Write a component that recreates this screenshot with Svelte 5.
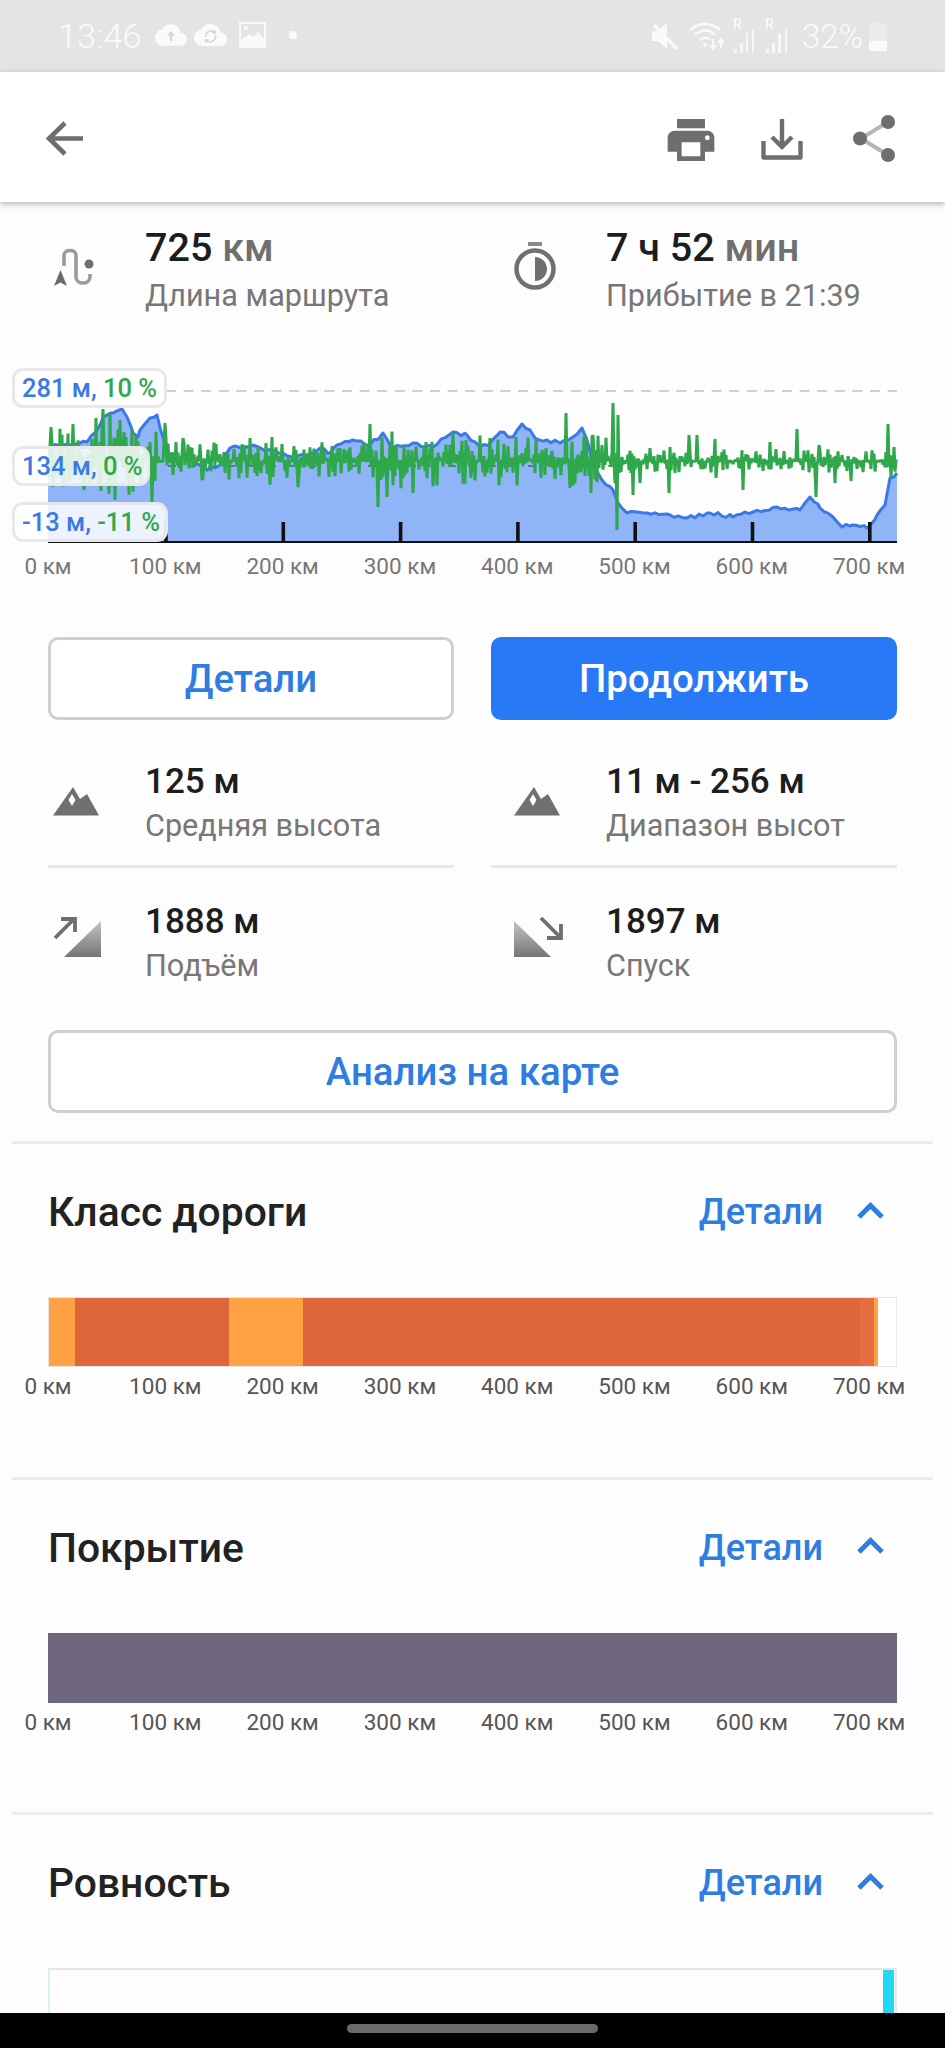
<script>
  const ticks = [0, 100, 200, 300, 400, 500, 600, 700];

  // blue elevation line, page coordinates read off the chart
  const elevation = [
    [48, 448], [63, 445], [87, 442], [97, 430], [103, 417], [113, 413], [122, 409], [127, 417],
    [133, 433], [138, 437], [140, 430], [150, 418], [157, 415], [163, 437], [170, 457], [187, 458],
    [200, 465], [207, 470], [220, 465], [230, 448], [253, 445], [267, 450], [293, 457], [307, 455],
    [320, 448], [330, 453], [337, 445], [353, 440], [370, 445], [383, 433], [393, 448], [413, 443],
    [433, 447], [453, 432], [467, 435], [480, 447], [490, 443], [500, 432], [513, 437], [522, 424],
    [530, 430], [535, 438], [547, 440], [560, 443], [573, 437], [582, 428], [587, 440], [593, 463],
    [602, 480], [613, 490], [618, 503], [627, 513], [643, 513], [670, 515], [687, 518], [710, 513],
    [733, 517], [753, 512], [777, 507], [800, 510], [810, 497], [820, 508], [833, 517], [842, 527],
    [852, 525], [867, 528], [877, 515], [885, 505], [890, 478], [897, 473]
  ];

  // tall green spikes that stand out of the noise
  const spikes = [
    [51, 427], [73, 424], [84, 490], [96, 418], [103, 409], [110, 413], [115, 500], [120, 420],
    [152, 503], [165, 423], [183, 438], [202, 480], [250, 438], [272, 437], [270, 485], [298, 438],
    [298, 487], [370, 424], [378, 507], [387, 497], [413, 430], [413, 493], [453, 433], [516, 437],
    [566, 413], [570, 488], [593, 435], [591, 493], [613, 403], [618, 415], [617, 530], [633, 443],
    [633, 495], [640, 483], [650, 448], [670, 447], [669, 493], [689, 435], [697, 435], [715, 439],
    [716, 478], [743, 490], [770, 442], [797, 429], [816, 497], [819, 445], [835, 483], [851, 481],
    [888, 424], [891, 477], [894, 447]
  ];

  function random(seed) {
    let s = seed;
    return () => {
      s = (s * 16807) % 2147483647;
      return s / 2147483647;
    };
  }

  function noiseAmp(x) {
    if (x < 170) return 34;
    if (x > 375 && x < 405) return 30;
    if (x > 430 && x < 620) return 26;
    if (x < 620) return 19;
    return 12;
  }

  function greenPath() {
    const rnd = random(4711);
    const byX = new Map(spikes.map(([x, y]) => [x, y]));
    let d = '';
    for (let x = 48; x <= 897; x += 1) {
      const side = x % 2 ? 1 : -1;
      const y = byX.get(x) ?? 461 + side * noiseAmp(x) * Math.pow(rnd(), 1.9);
      d += `${d ? 'L' : 'M'}${x} ${y.toFixed(1)}`;
    }
    return d;
  }

  function bluePath() {
    const rnd = random(99);
    let d = '';
    elevation.forEach(([x, y], i) => {
      const next = elevation[i + 1];
      d += `${d ? 'L' : 'M'}${x} ${y}`;
      if (!next) return;
      for (let px = x + 4; px < next[0] - 1; px += 4) {
        const k = (px - x) / (next[0] - x);
        d += `L${px} ${(y + (next[1] - y) * k + (rnd() - 0.5) * 4).toFixed(1)}`;
      }
    });
    return d;
  }

  const line = bluePath();
  const area = `${line}L897 542L48 542Z`;
  const green = greenPath();

  const roadClass = [
    ['#ffa244', 27],
    ['#df663b', 154],
    ['#ffa244', 74],
    ['#df663b', 557],
    ['#e56e40', 14],
    ['#ffa244', 4],
    ['#ffffff', 19]
  ];
</script>

{#snippet axis()}
  <div class="axis">
    {#each ticks as t}
      <span>{t} км</span>
    {/each}
  </div>
{/snippet}

{#snippet head(title)}
  <div class="sec-head">
    <h2>{title}</h2>
    <span class="sec-link">Детали</span>
    <svg class="chev" width="29" height="17" viewBox="0 0 29 17"><path d="M3 15L14.500 3.500L26 15" fill="none" stroke="#2f7de1" stroke-width="5" /></svg>
  </div>
{/snippet}

{#snippet mountain()}
  <svg class="peak" width="46" height="29" viewBox="0 0 46 29">
    <path d="M0 28.500L20 0L27 12L34 7L46 28.500Z" fill="#707070" />
    <path d="M19 7L22.500 13L19 19L15.500 13Z" fill="#fff" />
  </svg>
{/snippet}

<div class="screen">
  <div class="status">
    <span class="clock">13:46</span>
    <svg class="cloud" width="32" height="24" viewBox="0 0 24 18"><path d="M19.350 7.040C18.670 3.590 15.640 1 12 1 9.110 1 6.600 2.640 5.350 5.040 2.340 5.360 0 7.910 0 11c0 3.310 2.690 6 6 6h13c2.760 0 5-2.240 5-5 0-2.640-2.050-4.780-4.650-4.960z" fill="#fafafa" /><path d="M12 6L8.800 9.500h2.400v4h1.600v-4h2.400z" fill="#d6d6d6" /></svg>
    <svg class="cloud2" width="33" height="26" viewBox="0 0 24 18"><path d="M19.350 7.040C18.670 3.590 15.640 1 12 1 9.110 1 6.600 2.640 5.350 5.040 2.340 5.360 0 7.910 0 11c0 3.310 2.690 6 6 6h13c2.760 0 5-2.240 5-5 0-2.640-2.050-4.780-4.650-4.960z" fill="#fafafa" /><path d="M8.500 10.500A4 4 0 0 1 15 7M15.500 9A4 4 0 0 1 9 13M15.500 5.500V7.500H13.500M8.500 14.500V12.500H10.500" fill="none" stroke="#d6d6d6" stroke-width="1.200" /></svg>
    <svg class="pic" width="27" height="26" viewBox="0 0 27 26"><path d="M0 0H27V26H0Z" fill="#fafafa" /><path d="M2 2H25V17L19 10L14 15L10 12L2 18Z" fill="#e4e4e4" /><circle cx="7" cy="6" r="2" fill="#fafafa" /></svg>
    <span class="dot"></span>
    <span class="grow"></span>
    <svg class="mute" width="26" height="28" viewBox="0 0 26 28"><path d="M0 9H6L15 1V27L6 19H0Z" fill="#fafafa" /><path d="M2 3L25 27" stroke="#fafafa" stroke-width="3.500" /></svg>
    <svg class="wifi" width="36" height="28" viewBox="0 0 36 28"><g fill="none" stroke="#fafafa" stroke-width="2.500"><path d="M1 8C10 0 22 0 31 8" /><path d="M6 13C12 7 20 7 26 13" /><path d="M11 18C14 15 18 15 21 18" /></g><circle cx="16" cy="23" r="2" fill="#fafafa" /><path d="M24 17V26M32 26V18M21 23L24 27L27 23M29 21L32 17L35 21" fill="none" stroke="#fafafa" stroke-width="1.800" /></svg>
    <div class="signal">
      <b>R</b>
      <svg width="25" height="28" viewBox="0 0 25 28"><path d="M2 24H5V28H2ZM8 18H11V28H8ZM14 8H16V28H14ZM20 4H22V28H20Z" fill="#fafafa" fill-opacity=".8" /></svg>
    </div>
    <div class="signal second">
      <b>R</b>
      <svg width="25" height="28" viewBox="0 0 25 28"><path d="M2 24H5V28H2ZM8 18H11V28H8ZM14 8H17V28H14ZM21 4H23V28H21Z" fill="#fafafa" fill-opacity=".85" /></svg>
    </div>
    <span class="pct">32%</span>
    <svg class="batt" width="20" height="29" viewBox="0 0 20 29"><path d="M6 0H14V3H19V29H1V3H6Z" fill="#fafafa" fill-opacity=".35" /><path d="M1 19H19V29H1Z" fill="#fafafa" /></svg>
  </div>

  <header class="bar">
    <svg class="back" width="39" height="35" viewBox="0 0 39 35"><path d="M38 17.500H4M20 2L4 17.500L20 33" fill="none" stroke="#6e6e6e" stroke-width="4.600" /></svg>
    <span class="grow"></span>
    <svg class="print" width="48" height="42" viewBox="2 3 20 18"><path d="M19 8H5c-1.660 0-3 1.340-3 3v6h4v4h12v-4h4v-6c0-1.660-1.340-3-3-3zm-3 11H8v-6h8v6zm3-7c-.550 0-1-.450-1-1s.450-1 1-1 1 .450 1 1-.450 1-1 1zm-1-9H6v4h12V3z" fill="#6e6e6e" /></svg>
    <svg class="save" width="42" height="41" viewBox="0 0 42 41"><path d="M21 0V27M11 18L21 28L31 18" fill="none" stroke="#6e6e6e" stroke-width="4.400" /><path d="M2.500 22V38.500H39.500V22" fill="none" stroke="#6e6e6e" stroke-width="4.400" stroke-linejoin="round" /></svg>
    <svg class="share" width="43" height="47" viewBox="0 0 43 47"><path d="M8 23.500L35 7M8 23.500L35 40" stroke="#b5b5b5" stroke-width="4" /><circle cx="7" cy="23.500" r="7" fill="#6e6e6e" /><circle cx="35" cy="7" r="7" fill="#6e6e6e" /><circle cx="35" cy="40" r="7" fill="#6e6e6e" /></svg>
  </header>

  <main>
    <div class="stats first">
      <div class="stat">
        <span class="ic">
          <svg width="42" height="42" viewBox="0 0 42 42">
            <path d="M11 21V10C11 4 23 4 23 10V32C23 40 37 40 37 32V29" fill="none" stroke="#9a9a9a" stroke-width="3.600" />
            <path d="M7.500 25L1 41L7.500 37.500L14 41Z" fill="#6a6a6a" />
            <circle cx="36" cy="19" r="4.500" fill="#6e6e6e" />
          </svg>
        </span>
        <div><p class="val">725 <em>км</em></p><p class="lab">Длина маршрута</p></div>
      </div>
      <div class="stat">
        <span class="ic">
          <svg width="42" height="48" viewBox="0 0 42 48">
            <path d="M14 0H28V4H14Z" fill="#8a8a8a" />
            <circle cx="21" cy="27" r="18.500" fill="none" stroke="#707070" stroke-width="4.500" />
            <path d="M21 15A12 12 0 0 1 21 39Z" fill="#707070" />
          </svg>
        </span>
        <div><p class="val">7 ч 52 <em>мин</em></p><p class="lab">Прибытие в 21:39</p></div>
      </div>
    </div>

    <div class="chart">
      <svg width="945" height="190" viewBox="0 360 945 190">
        <path d={area} fill="#8fb4f8" />
        <path d="M166 391H897" stroke="#cfcfcf" stroke-width="2" stroke-dasharray="10 7.600" />
        <path d="M48 466H620" stroke="#3a5a40" stroke-width="2" stroke-dasharray="8 12" opacity=".6" />
        <path d={line} fill="none" stroke="#3b78e8" stroke-width="3" stroke-linejoin="round" />
        <path d={green} fill="none" stroke="#2ea84a" stroke-width="3" stroke-linejoin="bevel" />
        <path d="M48 542H897" stroke="#111" stroke-width="2" />
        {#each ticks.slice(1) as t, i}
          <path d="M{166 + i * 117.300} 522V542" stroke="#111" stroke-width="3.600" />
        {/each}
      </svg>
      <div class="tag t1"><span class="b">281 м,</span> <span class="g">10 %</span></div>
      <div class="tag t2"><span class="b">134 м,</span> <span class="g">0 %</span></div>
      <div class="tag t3"><span class="b">-13 м,</span> <span class="g">-11 %</span></div>
    </div>
    {@render axis()}

    <div class="btns">
      <button class="ghost">Детали</button>
      <button class="solid">Продолжить</button>
    </div>

    <div class="stats second">
      <div class="stat line">
        <span class="ic">{@render mountain()}</span>
        <div><p class="val">125 м</p><p class="lab">Средняя высота</p></div>
      </div>
      <div class="stat line">
        <span class="ic">{@render mountain()}</span>
        <div><p class="val">11 м - 256 м</p><p class="lab">Диапазон высот</p></div>
      </div>
      <div class="stat">
        <span class="ic up">
          <svg width="48" height="42" viewBox="0 0 48 42">
            <defs><linearGradient id="slope" x1="0" y1="0" x2="0" y2="1"><stop offset="0" stop-color="#c4c4c4" /><stop offset="1" stop-color="#757575" /></linearGradient></defs>
            <path d="M48 5V41H11Z" fill="url(#slope)" />
            <path d="M2 22L21 3M8 3H22V16" fill="none" stroke="#6e6e6e" stroke-width="3.800" />
          </svg>
        </span>
        <div><p class="val">1888 м</p><p class="lab">Подъём</p></div>
      </div>
      <div class="stat">
        <span class="ic up">
          <svg width="50" height="42" viewBox="0 0 50 42">
            <defs><linearGradient id="slope2" x1="0" y1="0" x2="0" y2="1"><stop offset="0" stop-color="#c4c4c4" /><stop offset="1" stop-color="#757575" /></linearGradient></defs>
            <path d="M0 5V41H37Z" fill="url(#slope2)" />
            <path d="M27 2L47 22M47 8V22H33" fill="none" stroke="#6e6e6e" stroke-width="3.800" />
          </svg>
        </span>
        <div><p class="val">1897 м</p><p class="lab">Спуск</p></div>
      </div>
    </div>

    <button class="ghost wide">Анализ на карте</button>

    <section>
      {@render head('Класс дороги')}
      <div class="strip road">
        {#each roadClass as [color, w]}
          <i style="background:{color};width:{w}px"></i>
        {/each}
      </div>
      {@render axis()}
    </section>

    <section>
      {@render head('Покрытие')}
      <div class="strip plain"></div>
      {@render axis()}
    </section>

    <section>
      {@render head('Ровность')}
      <div class="strip smooth"><i></i></div>
    </section>
  </main>

  <div class="nav"><span></span></div>
</div>

<style>
  :global(body) {
    background: #fdfdfd;
    overflow: hidden;
  }

  .screen {
    position: relative;
    height: 2048px;
    overflow: hidden;
    font-family: Roboto, "Liberation Sans", sans-serif;
    background: #fdfdfd;
  }

  p, h2 { margin: 0; }

  .grow { flex: 1; }

  .status {
    height: 72px;
    box-sizing: border-box;
    background: #e4e4e4;
    display: flex;
    align-items: center;
    padding: 0 57px 0 58px;
    color: #fafafa;
  }

  .clock { font-size: 34px; font-weight: 300; letter-spacing: .2px; width: 97px; }
  .cloud { margin-top: -2px; }
  .cloud2 { margin-left: 7px; margin-top: -2px; }
  .pic { margin-left: 12px; margin-top: -3px; }
  .dot { width: 8px; height: 8px; border-radius: 50%; background: #fafafa; margin-left: 23px; margin-top: -2px; }
  .mute { margin-right: 11px; }
  .wifi { margin-right: 7px; }

  .signal { position: relative; width: 25px; margin-right: 7px; height: 34px; display: flex; align-items: flex-end; }
  .signal b { position: absolute; left: 1px; top: -3px; font-size: 14px; font-weight: 500; }
  .signal.second { margin-right: 13px; }

  .pct { font-size: 33px; font-weight: 300; width: 66px; }

  .bar {
    height: 130px;
    box-sizing: border-box;
    background: #fff;
    display: flex;
    align-items: center;
    padding: 2px 49px 0 45px;
    box-shadow: 0 2px 6px rgba(0, 0, 0, .3);
    position: relative;
  }

  .print { margin-top: 3px; }
  .save { margin-left: 46px; margin-top: 3px; }
  .share { margin-left: 50px; }

  .stats {
    display: grid;
    grid-template-columns: 406px 406px;
    column-gap: 37px;
    margin: 0 48px;
  }

  .stats.first { padding-top: 20px; }
  .stats.second { margin-top: 21px; }

  .stat {
    display: flex;
    align-items: center;
    height: 150px;
    box-sizing: border-box;
  }

  .stat:nth-child(even) { padding-left: 18px; }

  .stats.first .stat { height: 98px; }

  .stat.line { border-bottom: 3px solid #e8e8e8; height: 127px; }

  .ic {
    width: 97px;
    flex: none;
    display: flex;
    padding-left: 5px;
    box-sizing: border-box;
  }

  .stats.first .ic { margin-top: -10px; }
  .ic.up { margin-top: -12px; }
  .peak { margin-top: -4px; }

  .val {
    font-size: 35px;
    line-height: 46px;
    font-weight: 500;
    color: #1d1d1d;
  }

  .stats.first .val { font-size: 39.500px; margin-bottom: 4px; }

  .val em { font-style: normal; color: #6f6f6f; }

  .lab {
    font-size: 30.600px;
    line-height: 42px;
    color: #777;
  }

  .chart {
    position: relative;
    height: 190px;
    margin-top: 40px;
  }

  .chart svg { display: block; }

  .tag {
    position: absolute;
    left: 12px;
    box-sizing: border-box;
    height: 40px;
    padding: 0 7px;
    border: 3px solid #e8e8e8;
    border-radius: 11px;
    background: rgba(255, 255, 255, .84);
    font-size: 25.500px;
    font-weight: 500;
    line-height: 34px;
    white-space: nowrap;
  }

  .t1 { top: 8px; width: 155px; }
  .t2 { top: 86px; width: 138px; }
  .t3 { top: 142px; width: 156px; }

  .b { color: #3b78e8; }
  .g { color: #2ea84a; }

  .axis {
    display: flex;
    margin-left: -10.650px;
    height: 32px;
    align-items: center;
  }

  .axis span {
    flex: none;
    width: 117.300px;
    text-align: center;
    font-size: 22.500px;
    color: #777;
    white-space: nowrap;
  }

  section .axis { margin-top: 3px; margin-left: -58.650px; }
  section .axis span { color: #555; }

  .btns {
    display: grid;
    grid-template-columns: 406px 406px;
    gap: 37px;
    margin: 55px 48px 0;
  }

  button {
    height: 83px;
    border-radius: 10px;
    font-family: inherit;
    font-size: 38.400px;
    font-weight: 500;
    padding: 0;
  }

  .ghost {
    background: #fff;
    border: 3px solid #cfcfcf;
    color: #2f7de1;
  }

  .solid {
    background: #2979f6;
    border: 0;
    color: #fff;
  }

  .wide {
    display: block;
    width: 849px;
    margin: 12px 48px 0;
  }

  section {
    height: 335.500px;
    box-sizing: border-box;
    margin: 0 12px;
    border-top: 3px solid #ececec;
    padding: 0 36px;
  }

  .wide + section { margin-top: 28px; }

  .sec-head {
    display: flex;
    align-items: center;
    height: 50px;
    margin-top: 43px;
    margin-bottom: 60px;
  }

  h2 {
    flex: 1;
    font-size: 40.800px;
    font-weight: 500;
    color: #222;
  }

  .sec-link {
    font-size: 36px;
    font-weight: 500;
    color: #2f7de1;
    margin-right: 33px;
  }

  .chev { margin-right: 12px; margin-top: -4px; }

  .strip {
    height: 70px;
    display: flex;
    box-sizing: border-box;
  }

  .road { outline: 1px solid #e6e6e6; outline-offset: -1px; }
  .road i { display: block; height: 100%; flex: none; }

  .plain { background: #6e667c; }

  .smooth {
    border: 2px solid #e6e6e6;
    border-bottom: 0;
    border-left-color: #d8f1fa;
    justify-content: flex-end;
    height: 60px;
  }

  .smooth i { display: block; width: 11px; margin-right: 1px; background: #21d9f3; }

  .nav {
    position: absolute;
    left: 0;
    right: 0;
    bottom: 0;
    height: 35px;
    background: #000;
    display: flex;
    justify-content: center;
    align-items: center;
  }

  .nav span {
    width: 251px;
    height: 9px;
    border-radius: 5px;
    background: #6a6a6a;
    margin-bottom: 5px;
  }
</style>
